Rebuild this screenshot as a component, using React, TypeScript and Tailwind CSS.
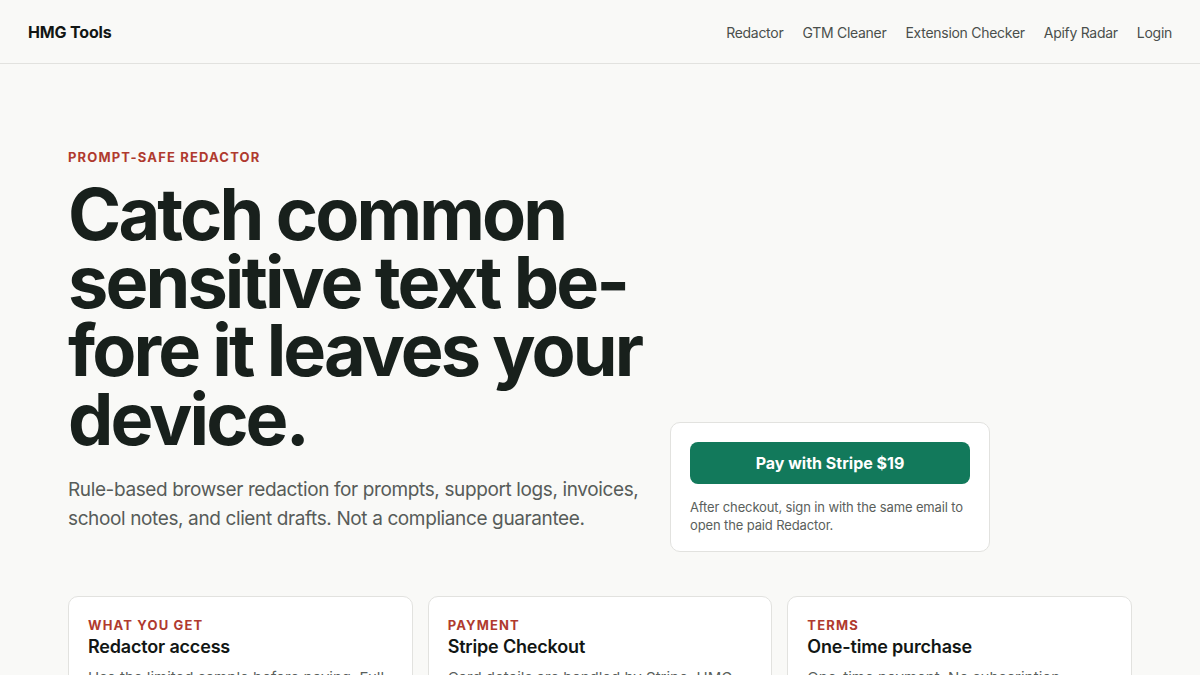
const navLinks = ['Redactor', 'GTM Cleaner', 'Extension Checker', 'Apify Radar', 'Login'];

const cards = [
  {
    label: 'What you get',
    title: 'Redactor access',
    body: 'Use the limited sample before paying. Full access unlocks the paid Redactor with every rule set.',
  },
  {
    label: 'Payment',
    title: 'Stripe Checkout',
    body: 'Card details are handled by Stripe. HMG Tools never sees or stores your card number.',
  },
  {
    label: 'Terms',
    title: 'One-time purchase',
    body: 'One-time payment. No subscription. Refunds are handled case by case by email.',
  },
];

export default function App() {
  return (
    <div className="min-h-screen bg-[#f9f9f7] text-[#18201c] font-['Inter','Noto_Sans',sans-serif]">
      {/* Header */}
      <header className="h-[64px] border-b border-[#e2e2df] flex items-center justify-between px-[28px] pt-[2px]">
        <a className="text-[16px] font-bold tracking-[-0.01em] text-[#121614] -mt-[1px]">HMG Tools</a>
        <nav className="flex items-center gap-[19px] text-[14px] tracking-[-0.02em] text-[#4a4f4c]">
          {navLinks.map((l) => (
            <a key={l}>{l}</a>
          ))}
        </nav>
      </header>

      <main className="max-w-[1064px] mx-auto">
        {/* Hero */}
        <section className="pt-[84px] flex items-end gap-[12px]">
          <div className="w-[590px] shrink-0">
            <p className="text-[13px] font-bold tracking-[0.09em] uppercase text-[#b03a2e]">
              Prompt-safe redactor
            </p>
            <h1 className="mt-[12px] text-[72px] leading-[0.95] font-bold tracking-[-0.04em] text-[#18201c] w-[600px]">
              Catch common sensitive text be{'\u00AD'}fore it leaves your device.
            </h1>
            <p className="mt-[22px] text-[19px] leading-[29px] tracking-[-0.02em] text-[#575c59]">
              Rule-based browser redaction for prompts, support logs, invoices, school notes, and client drafts. Not a compliance guarantee.
            </p>
          </div>
          <div className="w-[320px] shrink-0 mb-[-19px] bg-white border border-[#e2e2df] rounded-[10px] px-[19px] pt-[19px] pb-[17px]">
            <button className="w-full h-[42px] rounded-[8px] bg-[#12795b] text-white text-[16px] font-bold">
              Pay with Stripe $19
            </button>
            <p className="mt-[14px] text-[13px] leading-[18px] tracking-[-0.01em] text-[#5a5f5c]">
              After checkout, sign in with the same email to open the paid Redactor.
            </p>
          </div>
        </section>

        {/* Feature cards */}
        <section className="mt-[63px] grid grid-cols-3 gap-[15px]">
          {cards.map((c) => (
            <div key={c.title} className="bg-white border border-[#e2e2df] rounded-[10px] px-[19px] pt-[19px] pb-[20px]">
              <p className="text-[13px] leading-[19px] font-bold tracking-[0.09em] uppercase text-[#b03a2e]">{c.label}</p>
              <h3 className="mt-[1px] text-[18px] leading-[22px] font-semibold tracking-[-0.01em] text-[#121614]">{c.title}</h3>
              <p className="mt-[8px] text-[15px] leading-[23px] text-[#5a5f5c]">{c.body}</p>
            </div>
          ))}
        </section>
      </main>
    </div>
  );
}
